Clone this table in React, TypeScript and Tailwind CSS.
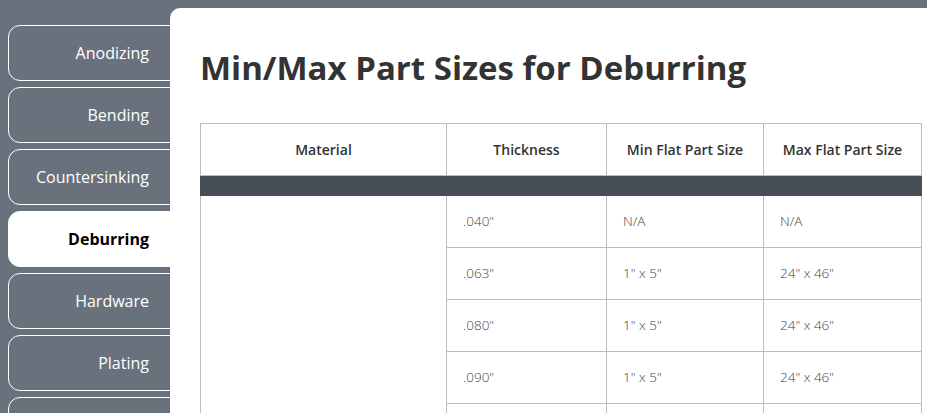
const TABS = ["Anodizing", "Bending", "Countersinking", "Deburring", "Hardware", "Plating", "Tapping"];
const ACTIVE = "Deburring";

const ROWS = [
  { thickness: '.040"', min: "N/A", max: "N/A" },
  { thickness: '.063"', min: '1" x 5"', max: '24" x 46"' },
  { thickness: '.080"', min: '1" x 5"', max: '24" x 46"' },
  { thickness: '.090"', min: '1" x 5"', max: '24" x 46"' },
  { thickness: '.100"', min: '1" x 5"', max: '24" x 46"' },
];

export default function App() {
  return (
    <div className="flex h-[413px] w-[927px] overflow-hidden bg-[#69727c] font-['Open_Sans',sans-serif]">
      <nav className="flex w-[170px] shrink-0 flex-col gap-[6px] overflow-hidden pl-2 pt-[25px]">
        {TABS.map((t) => (
          <div
            key={t}
            className={
              t === ACTIVE
                ? "flex h-[56px] w-[180px] shrink-0 items-center justify-end rounded-[12px] border border-white bg-white pr-[38px] text-[16px] font-bold text-black"
                : "flex h-[56px] w-[180px] shrink-0 items-center justify-end rounded-[12px] border border-white pr-[38px] text-[16px] text-white"
            }
          >
            {t}
          </div>
        ))}
      </nav>

      <main className="mt-2 flex-1 rounded-tl-[10px] bg-white pl-[30px] pr-[6px] pt-[39px]">
        <h1 className="text-[33px] font-bold leading-[42px] text-[#333]">
          Min/Max Part Sizes for Deburring
        </h1>

        <table className="mt-[34px] w-[721px] table-fixed border-collapse text-[13.5px]">
          <colgroup>
            <col className="w-[246px]" />
            <col className="w-[160px]" />
            <col className="w-[157px]" />
            <col className="w-[158px]" />
          </colgroup>
          <thead>
            <tr className="h-[52px]">
              {["Material", "Thickness", "Min Flat Part Size", "Max Flat Part Size"].map((h) => (
                <th key={h} className="border border-[#bdbdbd] text-center text-[14px] font-semibold text-[#333]">
                  {h}
                </th>
              ))}
            </tr>
            <tr className="h-[20px] bg-[#474e56]">
              <td colSpan={4} className="border border-[#474e56]" />
            </tr>
          </thead>
          <tbody className="font-light text-[#444]">
            {ROWS.map((r, i) => (
              <tr key={i} className="h-[52px]">
                {i === 0 && <td rowSpan={ROWS.length} className="border border-[#bdbdbd]" />}
                <td className="border border-[#bdbdbd] pl-4">{r.thickness}</td>
                <td className="border border-[#bdbdbd] pl-4">{r.min}</td>
                <td className="border border-[#bdbdbd] pl-4">{r.max}</td>
              </tr>
            ))}
          </tbody>
        </table>
      </main>
    </div>
  );
}
